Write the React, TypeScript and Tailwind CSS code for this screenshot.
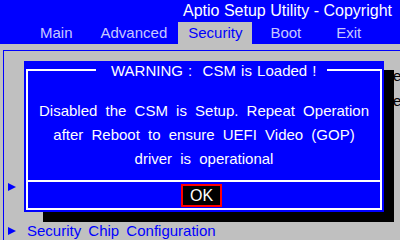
export default function App() {
  const tabs = [
    { label: "Main", ml: "ml-[30px]", active: false },
    { label: "Advanced", ml: "ml-[8px]", active: false },
    { label: "Security", ml: "ml-[1px]", active: true },
    { label: "Boot", ml: "ml-[8px]", active: false },
    { label: "Exit", ml: "ml-[15px]", active: false },
  ];

  return (
    <div
      className="relative w-[400px] h-[240px] overflow-hidden bg-[#c0c0c0]"
      style={{ fontFamily: '"Liberation Sans", Arial, sans-serif' }}
    >
      {/* header */}
      <div className="h-[44px] bg-[#0000ff]">
        <div className="h-[22px] pl-[183px] text-[16px] leading-[21px] text-white whitespace-nowrap">
          Aptio Setup Utility - Copyright
        </div>
        <div className="flex h-[22px] text-[15px] leading-[22px] whitespace-nowrap">
          {tabs.map((t) => (
            <div
              key={t.label}
              className={`${t.ml} px-[10px] ${t.active ? "bg-[#c0c0c0] text-[#0000ff]" : "text-[#c8c8ff]"}`}
            >
              {t.label}
            </div>
          ))}
        </div>
      </div>

      {/* main panel */}
      <div className="mt-[6px] ml-[3px] h-[200px] border-l border-t border-[#0000ff] flex">
        <div className="flex-1 pt-[125px] text-[15px] text-[#0000ff] [word-spacing:3px]">
          <div className="h-[22px] flex items-center">
            <Arrow />
            <span className="ml-[7px]">Secure Boot</span>
          </div>
          <div className="h-[22px]" />
          <div className="h-[22px] flex items-center">
            <Arrow />
            <span className="ml-[7px]">Security Chip Configuration</span>
          </div>
        </div>
        <div className="w-[7px] overflow-hidden pt-[12px] text-[15px] leading-[25px] text-black whitespace-nowrap">
          <div>e</div>
          <div>e</div>
        </div>
      </div>

      {/* warning dialog */}
      <div className="absolute left-[24px] top-[61px] w-[360px] h-[151px] bg-[#0000ff]">
        <div className="absolute left-full top-[9px] w-[10px] h-[152px] bg-black" />
        <div className="absolute left-[19px] top-full w-[351px] h-[10px] bg-black" />

        <div className="absolute left-[2px] right-[2px] top-[8px] bottom-[2px] border-2 border-white flex flex-col">
          <div className="flex-1 pt-[28px] text-center text-white text-[15px] leading-[24px] [word-spacing:4px]">
            <div>Disabled the CSM is Setup. Repeat Operation</div>
            <div>after Reboot to ensure UEFI Video (GOP)</div>
            <div>driver is operational</div>
          </div>
          <div className="h-[28px] border-t-2 border-white flex items-center justify-center">
            <div className="h-[23px] px-[7px] border-2 border-[#ff0000] bg-black text-white text-[16px] leading-[19px] -ml-[5px]">
              OK
            </div>
          </div>
        </div>

        <div className="absolute left-[72px] top-[1px] pl-[15px] pr-[10px] bg-[#0000ff] text-white text-[15px] leading-[18px] whitespace-nowrap [word-spacing:1px]">
          WARNING :&nbsp; CSM is Loaded !
        </div>
      </div>
    </div>
  );
}

function Arrow() {
  return (
    <svg width="16" height="8" viewBox="0 0 16 8" className="shrink-0">
      <polygon points="4,0 12,4 4,8" fill="#0000ff" />
    </svg>
  );
}
